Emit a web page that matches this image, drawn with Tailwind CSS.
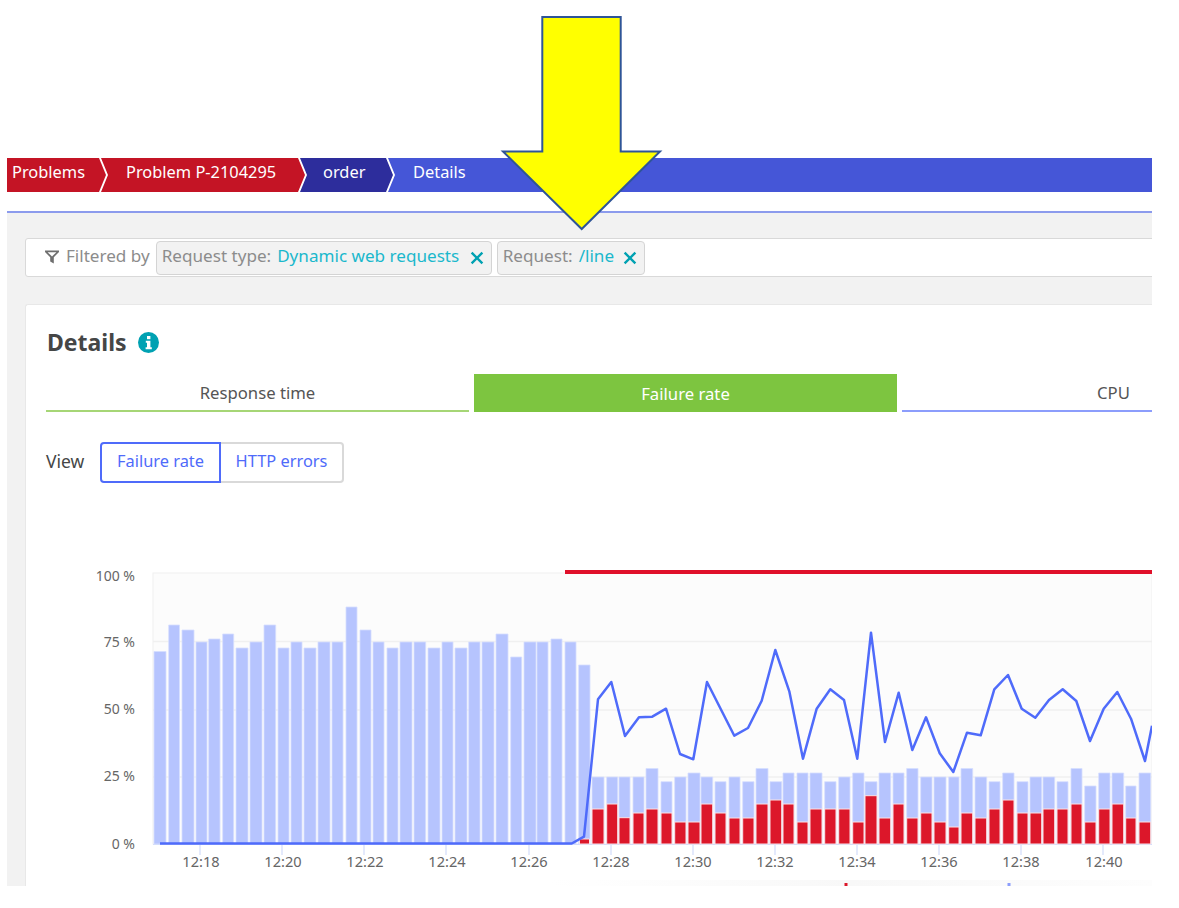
<!DOCTYPE html>
<html lang="en">
<head>
<meta charset="utf-8">
<title>Details</title>
<script src="https://cdn.jsdelivr.net/npm/@tailwindcss/browser@4"></script>
</head>
<body class="bg-white">
<div class="relative w-[1179px] h-[908px] overflow-hidden bg-white font-['Noto_Sans',sans-serif]">
  <div class="flex flex-col h-[886px] ml-[7px] w-[1145px] pt-[158px] overflow-hidden">
    <nav class="flex h-[34px] text-white text-[16.4px] shrink-0">
      <div class="w-[99px] pb-[5px] bg-[#c41425] flex items-center pl-[5px] [clip-path:polygon(0_0,calc(100%-7px)_0,100%_50%,calc(100%-7px)_100%,0_100%)]">Problems</div>
      <div class="w-[204px] pb-[5px] -ml-[5px] bg-[#c41425] flex items-center pl-[25px] [clip-path:polygon(0_0,calc(100%-7px)_0,100%_50%,calc(100%-7px)_100%,0_100%,7px_50%)]">Problem P-2104295</div>
      <div class="w-[93px] pb-[5px] -ml-[5px] bg-[#2d2d9c] flex items-center pl-[23px] [clip-path:polygon(0_0,calc(100%-7px)_0,100%_50%,calc(100%-7px)_100%,0_100%,7px_50%)]">order</div>
      <div class="flex-1 pb-[5px] -ml-[5px] bg-[#4556d7] flex items-center pl-[25px] [clip-path:polygon(0_0,100%_0,100%_100%,0_100%,7px_50%)]">Details</div>
    </nav>
    <div class="mt-[19px] h-[2px] bg-[#8c9bed] shrink-0"></div>
    <main class="flex-1 bg-[#f2f2f2] pl-[18px] pt-[25px] overflow-hidden">
      <div class="flex items-center h-[39px] w-[1180px] bg-white border border-[#d9d9d9] rounded-[3px] pl-[19px] text-[17.1px] text-[#8c8c8c]">
        <svg class="w-[14px] h-[14px] mr-[7px] mb-[1px]" viewBox="0 0 14 14"><path d="M0 0.5h14v1.5L8.8 7.2V13.5L5.2 11.5V7.2L0 2z" fill="#6f6f6f"/><path d="M2.6 2.2h8.8L7 6.4z" fill="#fff"/></svg>
        <span class="mb-[3px] shrink-0">Filtered by</span>
        <div class="ml-[6px] shrink-0 flex items-center h-[34px] w-[336px] pl-[5px] pb-[3px] bg-[#f2f2f2] border border-[#d4d4d4] rounded-[4px]">
          <span>Request type:</span><span class="ml-[6px] text-[#1ab8cc]">Dynamic web requests</span>
          <svg class="ml-[11px] mt-[3px] w-[14px] h-[14px]" viewBox="0 0 13 13"><path d="M1.5 1.5l10 10M11.5 1.5l-10 10" stroke="#00a1b2" stroke-width="2.2" fill="none"/></svg>
        </div>
        <div class="ml-[5px] shrink-0 flex items-center h-[34px] w-[148px] pl-[5px] pb-[3px] bg-[#f2f2f2] border border-[#d4d4d4] rounded-[4px]">
          <span>Request:</span><span class="ml-[6px] text-[#1ab8cc]">/line</span>
          <svg class="ml-[9px] mt-[3px] w-[14px] h-[14px]" viewBox="0 0 13 13"><path d="M1.5 1.5l10 10M11.5 1.5l-10 10" stroke="#00a1b2" stroke-width="2.2" fill="none"/></svg>
        </div>
      </div>
      <section class="mt-[27px] w-[1180px] h-[600px] bg-white border-t border-l border-[#e8e8e8] rounded-tl-[3px]">
        <div class="flex items-center gap-[11px] pl-[21px] pt-[18px] h-[56px]">
          <h2 class="text-[23px] leading-[36px] font-bold text-[#454646]">Details</h2>
          <svg class="w-[21px] h-[21px]" viewBox="0 0 21 21"><circle cx="10.5" cy="10.5" r="10.5" fill="#00a1b2"/><rect x="9" y="4" width="3.4" height="3.2" fill="#fff"/><path d="M7.8 8.8h4.6v6.4h1.4v2H7.6v-2h1.4v-4.4H7.8z" fill="#fff"/></svg>
        </div>
        <div class="flex pl-[20px] mt-[13px] h-[38px] text-[16.7px] text-[#555]">
          <div class="w-[423px] shrink-0 pt-[1px] flex items-center justify-center border-b-2 border-[#a6d676]">Response time</div>
          <div class="ml-[5px] w-[423px] shrink-0 pt-[1px] flex items-center justify-center bg-[#7dc540] text-white">Failure rate</div>
          <div class="ml-[5px] w-[423px] shrink-0 pt-[1px] flex items-center justify-center border-b-2 border-[#8c9dfc]">CPU</div>
        </div>
        <div class="flex items-center pl-[20px] mt-[30px] h-[41px] text-[16.4px]">
          <span class="w-[54px] pb-[3px] text-[17.5px] text-[#454646]">View</span>
          <div class="w-[121px] h-[41px] pb-[3px] flex items-center justify-center border-2 border-[#4f6bfa] rounded-l-[4px] text-[#4f6bfa]">Failure rate</div>
          <div class="w-[123px] h-[41px] pb-[3px] flex items-center justify-center border-2 border-l-0 border-[#d9d9d9] rounded-r-[4px] text-[#4f6bfa]">HTTP errors</div>
        </div>
        <svg class="block ml-[64px] mt-[77px] w-[1062px] h-[326px]" viewBox="90 560 1062 326" font-size="14.6" fill="#666">
          <defs>
            <linearGradient id="fade" x1="0" y1="0" x2="1" y2="0"><stop offset="0" stop-color="#fff"/><stop offset="0.5" stop-color="#f8f8f8"/><stop offset="1" stop-color="#fdfdfd"/></linearGradient>
          </defs>
          <rect x="153" y="573" width="999" height="271" fill="#fcfcfc" stroke="#f0f0f0"/>
          <path d="M153 641.5H1152M153 710H1152M153 777H1152" stroke="#f0f0f0" stroke-width="1.5"/>
          <path d="M153 844.5H1152M200 845v10M282 845v10M364 845v10M446 845v10M529 845v10M611 845v10M693 845v10M775 845v10M857 845v10M939 845v10M1021 845v10M1103 845v10" stroke="#d3dcfb" stroke-width="1.2"/>
          <rect x="550" y="880" width="602" height="6" fill="url(#fade)"/>
          <rect x="844.5" y="883" width="3" height="3" fill="#dc172a"/>
          <rect x="1007.5" y="883" width="3" height="3" fill="#8c9dfc"/>
          <path fill="#b6c4fe" stroke="#d5deff" stroke-width="0.8" d="M154 651.5H166V844H154ZM168.7 625H179.5V844H168.7ZM182 630H194V844H182ZM196 642H207V844H196ZM208.7 639H220V844H208.7ZM222.7 634H233.7V844H222.7ZM236 648H248V844H236ZM250 642H262V844H250ZM264 625H275.7V844H264ZM278 648H289V844H278ZM291 642H302V844H291ZM304 648H316V844H304ZM318 642H330V844H318ZM332 642H343V844H332ZM346 607H357V844H346ZM360 630H371V844H360ZM373 642H384V844H373ZM387 648H398V844H387ZM400 642H412V844H400ZM414 642H425.7V844H414ZM428 648H440V844H428ZM442 642H453V844H442ZM455 648H467V844H455ZM468.7 642H480V844H468.7ZM482 642H494V844H482ZM496 634H508V844H496ZM510.7 657H521.7V844H510.7ZM524 642H536V844H524ZM537 642H548V844H537ZM551 639H562V844H551ZM565 642H576V844H565ZM578.7 665H590V844H578.7ZM592 777H604V844H592ZM606.7 777H617.7V844H606.7ZM619 777H630V844H619ZM633 777H644V844H633ZM646 768.5H658V844H646ZM661 781.7H672V844H661ZM674.7 777H686V844H674.7ZM688 773H700V844H688ZM701 777H712.7V844H701ZM715 781.7H726V844H715ZM729 777H740V844H729ZM742.7 781.7H754V844H742.7ZM756 768.5H768V844H756ZM770 781.7H781.7V844H770ZM783 773H794V844H783ZM797 773H808V844H797ZM810 773H822V844H810ZM824.7 781.7H836V844H824.7ZM838.7 777H850V844H838.7ZM852.7 773H864V844H852.7ZM865 781.7H877V844H865ZM879 773H890.7V844H879ZM893 773H904V844H893ZM906.7 768.5H918V844H906.7ZM920.7 777H932V844H920.7ZM934 777H946V844H934ZM948.7 777H959V844H948.7ZM961 768.5H972.7V844H961ZM975 777H986.7V844H975ZM989 781.7H1000V844H989ZM1002.7 773H1014V844H1002.7ZM1017 781.7H1028V844H1017ZM1030 777H1041.7V844H1030ZM1043 777H1054.7V844H1043ZM1057 781.7H1068V844H1057ZM1071 768.5H1082V844H1071ZM1084.7 786H1096V844H1084.7ZM1098.7 773H1110V844H1098.7ZM1112 773H1123.7V844H1112ZM1125.7 786H1136V844H1125.7ZM1139 773H1150.7V844H1139Z"/>
          <path fill="#dc172a" stroke="#fbe3e6" stroke-width="1" d="M579.5 839H589.5V844H579.5ZM592 809H604V844H592ZM606.7 804H617.7V844H606.7ZM619 817.7H630V844H619ZM633 813H644V844H633ZM646 809H658V844H646ZM661 813H672V844H661ZM674.7 822H686V844H674.7ZM688 822H700V844H688ZM701 804H712.7V844H701ZM715 813H726V844H715ZM729 818H740V844H729ZM742.7 818H754V844H742.7ZM756 804H768V844H756ZM770 800H781.7V844H770ZM783 804H794V844H783ZM797 822H808V844H797ZM810 809H822V844H810ZM824.7 809H836V844H824.7ZM838.7 809H850V844H838.7ZM852.7 822H864V844H852.7ZM865 795.7H877V844H865ZM879 818H890.7V844H879ZM893 804H904V844H893ZM906.7 818H918V844H906.7ZM920.7 813H932V844H920.7ZM934 822H946V844H934ZM948.7 827H959V844H948.7ZM961 813H972.7V844H961ZM975 818H986.7V844H975ZM989 809H1000V844H989ZM1002.7 800H1014V844H1002.7ZM1017 813H1028V844H1017ZM1030 813H1041.7V844H1030ZM1043 809H1054.7V844H1043ZM1057 809H1068V844H1057ZM1071 804H1082V844H1071ZM1084.7 822H1096V844H1084.7ZM1098.7 809H1110V844H1098.7ZM1112 804H1123.7V844H1112ZM1125.7 818H1136V844H1125.7ZM1139 822H1150.7V844H1139Z"/>
          <polyline fill="none" stroke="#4f6bfa" stroke-width="2.5" stroke-linejoin="round" points="160,843.5 571.7,843.5 584,836.7 598,699.3 611.3,682 625,736 639,717.3 652.3,716.7 666,708.7 680,754 693.3,759.3 707,682 734.3,735.7 748,728 761.7,700.7 775.3,650 789.3,691.3 803,758.7 816.7,708.7 830.3,689.3 844,700 857.3,758.7 871,632.7 885,742 898.7,692.7 912.3,750 926,717.3 939.7,753.3 953.3,772 967,732.7 980.7,735.3 994.3,689.3 1008,675 1021.7,708.7 1035.3,717.7 1049,700 1062.7,689.3 1076.3,701 1090,741 1103.7,708.7 1117.3,692 1131,718.7 1145,761 1152,725.7"/>
          <rect x="565" y="570" width="587" height="4" fill="#e0102a"/>
          <g text-anchor="end" font-size="14">
            <text x="135" y="581">100 %</text>
            <text x="135" y="647">75 %</text>
            <text x="135" y="714">50 %</text>
            <text x="135" y="781">25 %</text>
            <text x="135" y="849">0 %</text>
          </g>
          <g text-anchor="middle">
            <text x="201" y="867">12:18</text>
            <text x="283" y="867">12:20</text>
            <text x="365" y="867">12:22</text>
            <text x="447" y="867">12:24</text>
            <text x="529" y="867">12:26</text>
            <text x="611" y="867">12:28</text>
            <text x="693" y="867">12:30</text>
            <text x="775" y="867">12:32</text>
            <text x="857" y="867">12:34</text>
            <text x="939" y="867">12:36</text>
            <text x="1021" y="867">12:38</text>
            <text x="1104" y="867">12:40</text>
          </g>
        </svg>
      </section>
    </main>
  </div>
  <svg class="absolute left-[500px] top-[14px] w-[164px] h-[218px]" viewBox="500 14 164 218">
    <path d="M542.3 17H620.7V151.5H660L581.7 229L503 151.5H542.3Z" fill="#ffff00" stroke="#2f5597" stroke-width="2"/>
  </svg>
</div>
</body>
</html>
